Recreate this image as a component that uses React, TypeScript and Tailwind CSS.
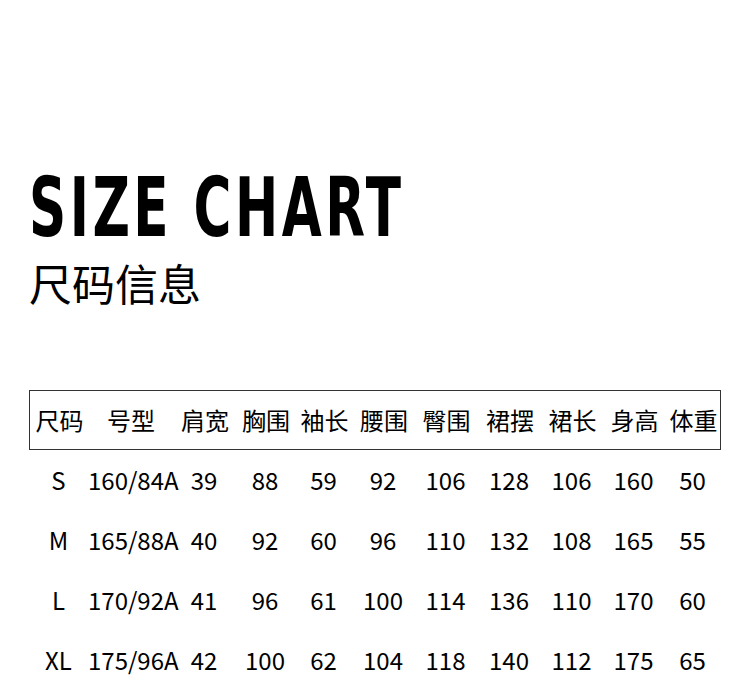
const headers = ['尺码', '号型', '肩宽', '胸围', '袖长', '腰围', '臀围', '裙摆', '裙长', '身高', '体重'];

const rows = [
  ['S', '160/84A', '39', '88', '59', '92', '106', '128', '106', '160', '50'],
  ['M', '165/88A', '40', '92', '60', '96', '110', '132', '108', '165', '55'],
  ['L', '170/92A', '41', '96', '61', '100', '114', '136', '110', '170', '60'],
  ['XL', '175/96A', '42', '100', '62', '104', '118', '140', '112', '175', '65'],
];

// column widths picked so each header/value sits centred like the source table
const cols = 'grid grid-cols-[59px_84px_64px_58px_59px_60px_65px_62px_63px_61px_57px]';

export default function App() {
  return (
    <div
      className="w-[750px] h-[691px] bg-white text-black overflow-hidden"
      style={{ fontFamily: '"Noto Sans CJK SC", "Noto Sans", sans-serif' }}
    >
      <div className="pt-[168px] pl-[29px]">
        <h1
          className="text-[82px] leading-[80px] font-bold tracking-[5px] origin-left scale-x-[0.7] whitespace-nowrap"
          style={{ fontFamily: '"DejaVu Sans Condensed", "DejaVu Sans", sans-serif' }}
        >
          SIZE CHART
        </h1>
        <div className="mt-[10px] text-[43px] leading-[48px]">尺码信息</div>
      </div>

      <div className="mt-[84px] ml-[29px] w-[692px]">
        <div className={`${cols} h-[60px] items-center border border-[#333]`}>
          {headers.map((h) => (
            <div key={h} className="text-center text-[24px] whitespace-nowrap">{h}</div>
          ))}
        </div>
        {rows.map((r) => (
          <div key={r[0]} className={`${cols} h-[60px] items-center`}>
            {r.map((v, i) => (
              <div key={i} className="text-center text-[24px] whitespace-nowrap">{v}</div>
            ))}
          </div>
        ))}
      </div>
    </div>
  );
}
